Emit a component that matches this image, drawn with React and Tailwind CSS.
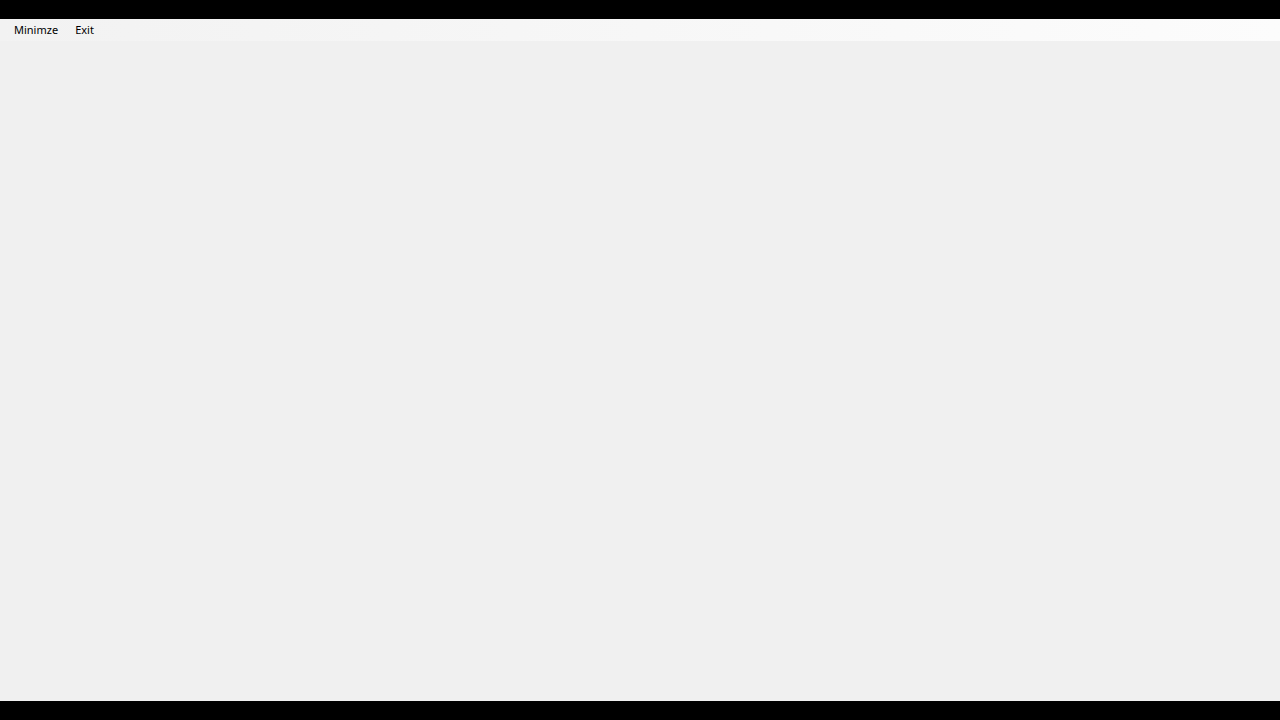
export default function App() {
  return (
    <div className="h-[720px] w-[1280px] flex flex-col bg-black overflow-hidden" style={{ fontFamily: '"Segoe UI", "Noto Sans", sans-serif' }}>
      <div className="h-[19px] shrink-0 bg-black" />
      <div className="flex-1 flex flex-col bg-[#f0f0f0]">
        <div className="h-[22px] shrink-0 flex items-center pl-[7px] bg-gradient-to-r from-[#f2f2f2] to-[#fcfcfc] text-[11px] text-black">
          <span className="px-[7px]">Minimze</span>
          <span className="px-[10px]">Exit</span>
        </div>
        <div className="flex-1" />
      </div>
      <div className="h-[19px] shrink-0 bg-black" />
    </div>
  )
}
